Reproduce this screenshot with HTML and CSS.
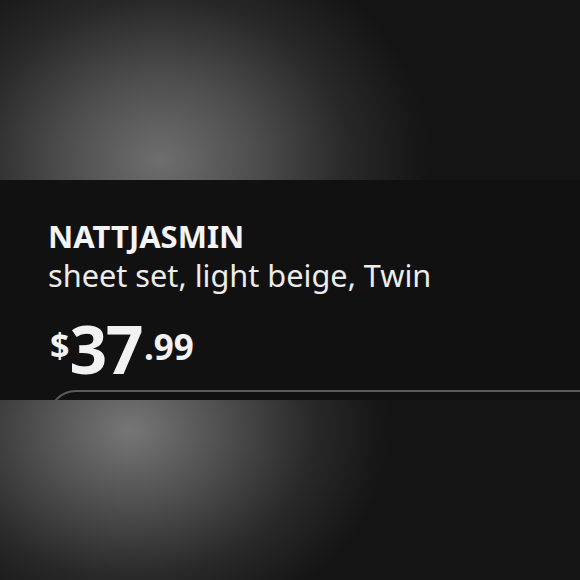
FILE: index.html
```html
<!DOCTYPE html>
<html lang="en">
<head>
<meta charset="utf-8">
<link rel="stylesheet" href="styles.css">
</head>
<body>
  <div class="glow glow-top"></div>
  <section class="product">
    <h1 class="name">NATTJASMIN</h1>
    <p class="desc">sheet set, light beige, Twin</p>
    <div class="price"><span class="cur">$</span><span class="int">37</span><span class="dec">.99</span></div>
    <div class="button"></div>
  </section>
  <div class="glow glow-bottom"></div>
</body>
</html>
```
FILE: styles.css
```css
html, body {
  margin: 0;
  padding: 0;
  background: #141414;
}
body {
  width: 580px;
  height: 580px;
  overflow: hidden;
  font-family: "Noto Sans", "Open Sans", sans-serif;
  color: #f0f0f0;
}
.glow {
  height: 180px;
  background-color: #141414;
}
.glow-top {
  background-image: radial-gradient(ellipse 270px 230px at 160px 160px, #6e6e6e 0%, #4e4e4e 35%, #282828 70%, #141414 100%);
}
.glow-bottom {
  background-image: radial-gradient(ellipse 260px 210px at 130px 30px, #767676 0%, #505050 35%, #292929 70%, #141414 100%);
}
.product {
  height: 220px;
  box-sizing: border-box;
  background: #111111;
  padding: 38px 0 0 48px;
  display: flex;
  flex-direction: column;
  overflow: hidden;
}
.name {
  margin: 0;
  font-size: 31px;
  font-weight: 700;
  line-height: 36px;
  color: #f4f4f4;
}
.desc {
  margin: 0;
  font-size: 30.7px;
  font-weight: 400;
  line-height: 42px;
  color: #ececec;
}
.price {
  display: flex;
  align-items: flex-start;
  margin-top: 19px;
  font-weight: 700;
  color: #f2f2f2;
}
.cur {
  font-size: 34px;
  line-height: 34px;
  margin-top: 13px;
  margin-left: 2px;
}
.int {
  font-size: 66px;
  line-height: 66px;
  letter-spacing: -1.5px;
}
.dec {
  font-size: 35px;
  line-height: 35px;
  margin-top: 14px;
  margin-left: 2px;
}
.button {
  margin-top: 9px;
  margin-right: -40px;
  height: 56px;
  border: 2px solid #5a5a5a;
  border-radius: 28px;
  flex-shrink: 0;
}
```
